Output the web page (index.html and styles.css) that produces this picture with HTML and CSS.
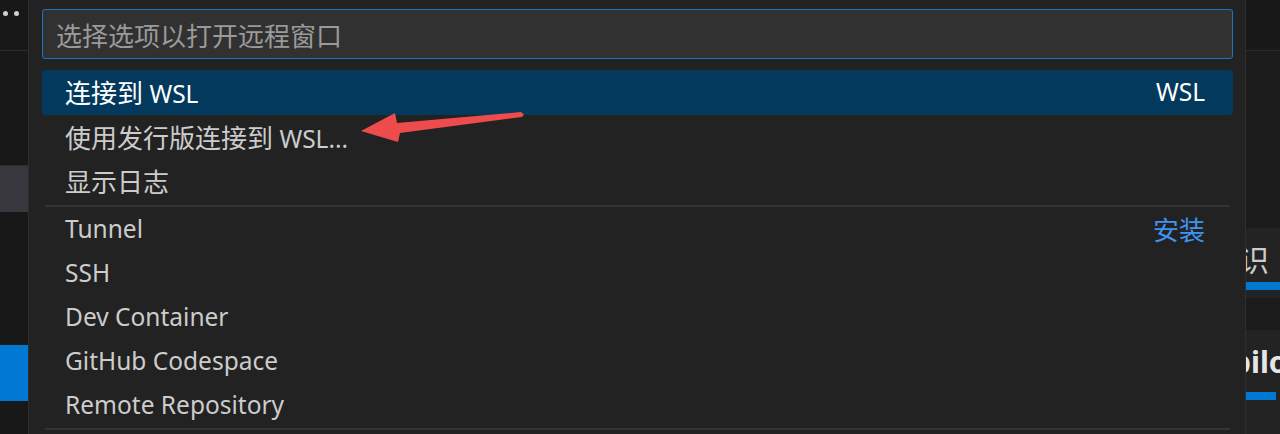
FILE: index.html
```html
<!DOCTYPE html>
<html lang="zh-CN">
<head>
<meta charset="utf-8">
<title>Remote</title>
<link rel="stylesheet" href="styles.css">
</head>
<body>
<div class="screen">
  <aside class="left">
    <div class="left-head"><span class="dot"></span><span class="dot"></span></div>
    <div class="left-sel"></div>
    <div class="left-active"></div>
  </aside>

  <section class="palette">
    <div class="input"><span class="placeholder zh">选择选项以打开远程窗口</span></div>
    <div class="list">
      <div class="row tall selected"><span><span class="zh">连接到</span> WSL</span><span class="desc">WSL</span></div>
      <div class="row tall"><span><span class="zh">使用发行版连接到</span> WSL...</span></div>
      <div class="row tall"><span class="zh">显示日志</span></div>
      <div class="sep"></div>
      <div class="row"><span>Tunnel</span><span class="link zh">安装</span></div>
      <div class="row"><span>SSH</span></div>
      <div class="row"><span>Dev Container</span></div>
      <div class="row"><span>GitHub Codespace</span></div>
      <div class="row"><span>Remote Repository</span></div>
      <div class="sep"></div>
    </div>
  </section>

  <aside class="right">
    <div class="right-head"></div>
    <div class="right-gap1"></div>
    <div class="right-card c1"><span class="rtext cjk">识</span><span class="rbar"></span></div>
    <div class="right-gap2"></div>
    <div class="right-card c2"><span class="rtext bold">pilot</span><span class="rbar short"></span></div>
  </aside>

  <svg class="arrow" width="1280" height="434" viewBox="0 0 1280 434" aria-hidden="true">
    <polygon points="361,131 395,113 397,123 521,112 524,114.5 522,117 400,133 398,142" fill="#ee4c4c"/>
  </svg>
</div>
</body>
</html>
```

FILE: styles.css
```css
* { box-sizing: border-box; }

html, body {
  margin: 0;
  padding: 0;
  background: #181818;
}

.screen {
  position: relative;
  width: 1280px;
  height: 434px;
  overflow: hidden;
  display: flex;
  font-family: "Noto Sans", "Noto Sans CJK SC", sans-serif;
  color: #cccccc;
}

.zh {
  font-family: "Noto Sans CJK SC", sans-serif;
  font-size: 26px;
}

/* left strip */
.left {
  width: 28px;
  flex: none;
  display: flex;
  flex-direction: column;
  background: #181818;
}
.left-head {
  height: 51px;
  border-bottom: 1px solid #2b2b2b;
  display: flex;
  gap: 6px;
  padding: 11px 0 0 3px;
}
.dot {
  width: 5px;
  height: 5px;
  border-radius: 50%;
  background: #d0d0d0;
}
.left-sel {
  margin-top: 114px;
  height: 47px;
  background: #37373d;
  border-top: 1px solid #2a2a2e;
}
.left-active {
  margin-top: 133px;
  height: 56px;
  background: #0078d4;
}

/* palette */
.palette {
  width: 1218px;
  flex: none;
  background: #222222;
  border-left: 1px solid #2e2e2e;
  border-right: 1px solid #2e2e2e;
  padding: 9px 12px 0 13px;
}
.input {
  height: 50px;
  border: 1px solid #1d74c6;
  border-radius: 3px;
  background: #313131;
  display: flex;
  align-items: center;
  padding-left: 13px;
  font-size: 26px;
}
.placeholder { color: #9a9a9a; }

.list {
  margin-top: 11px;
  display: flex;
  flex-direction: column;
}
.row {
  height: 44px;
  display: flex;
  align-items: center;
  justify-content: space-between;
  padding: 0 28px 1px 23px;
  font-size: 24.5px;
  color: #cccccc;
  border-radius: 3px;
  white-space: nowrap;
}
.row.tall { height: 44.5px; }
.row.selected {
  background: #04395e;
  color: #ffffff;
}
.desc { color: #ffffff; }
.link { color: #3e94f0; }
.sep {
  height: 3px;
  margin: 0 3px;
  border-top: 1px solid transparent;
  border-bottom: 2px solid #343434;
}

/* right strip */
.right {
  flex: 1;
  display: flex;
  flex-direction: column;
  background: #181818;
  overflow: hidden;
}
.right-head {
  height: 51px;
  border-bottom: 1px solid #2b2b2b;
}
.right-gap1 { height: 177px; background: #1b1b1b; }
.right-card {
  background: #232323;
  display: flex;
  flex-direction: column;
  white-space: nowrap;
}
.right-card.c1 { height: 70px; padding-top: 12px; }
.right-card.c2 { height: 104px; padding-top: 14px; }
.right-gap2 { height: 32px; background: #1b1b1b; }
.rtext {
  font-size: 30px;
  line-height: 36px;
  color: #cccccc;
}
.rtext.cjk {
  font-family: "Noto Sans CJK SC", sans-serif;
  margin-left: -7px;
}
.rtext.bold {
  font-weight: 700;
  color: #e6e6e6;
  margin-left: -14px;
}
.rbar {
  margin-top: 6px;
  height: 8px;
  width: 40px;
  background: #0078d4;
}
.rbar.short { width: 30px; margin-top: 12px; }

.arrow {
  position: absolute;
  left: 0;
  top: 0;
  pointer-events: none;
}
```
